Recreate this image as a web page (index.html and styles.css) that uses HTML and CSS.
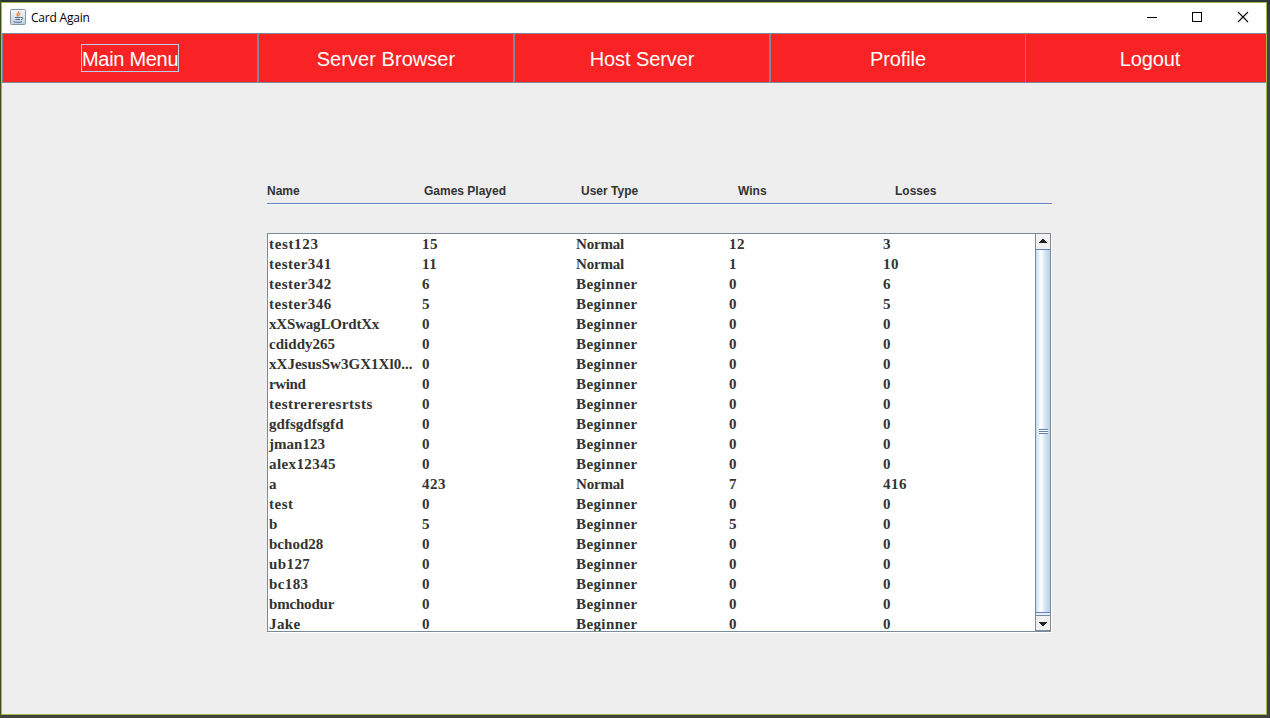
FILE: index.html
```
<!DOCTYPE html>
<html lang="en">
<head>
<meta charset="utf-8">
<title>Card Again</title>
<link rel="stylesheet" href="styles.css">
</head>
<body>
<div class="window">
  <header class="titlebar">
    <svg class="app-icon" width="16" height="16" viewBox="0 0 16 16">
      <defs><linearGradient id="tile" x1="0" y1="0" x2="0" y2="1"><stop offset="0" stop-color="#f4f6f8"/><stop offset="1" stop-color="#c3d0de"/></linearGradient></defs>
      <rect x=".5" y=".5" width="15" height="15" rx="1" fill="url(#tile)" stroke="#8295aa"/>
      <path d="M8.800 2c.8 2-2.800 2.500-1.600 4.300l.8 1.200M10.500 4.300C8.500 5 8.500 5.800 9.200 7" fill="none" stroke="#e8833a" stroke-width="1.200"/>
      <path d="M5 8.500h5.500M5.500 10.500h4.500M3.500 12.700c2 .9 7 .8 8.500 0M11 8.500c2.600-.5 2.200 1.800 0 2.200" fill="none" stroke="#4c6d8e"/>
    </svg>
    <span class="title">Card Again</span>
    <svg class="controls" width="103" height="12" viewBox="0 0 103 12" fill="none" stroke="#000" shape-rendering="crispEdges">
      <path d="M0 6.500h10"/>
      <rect x="45.500" y="1.500" width="9" height="9"/>
      <path d="M91 1l10 10M101 1L91 11" shape-rendering="auto" stroke-width="1.100"/>
    </svg>
  </header>
  <nav class="nav">
    <a class="tab"><span class="label focused">Main Menu</span></a>
    <a class="tab"><span class="label wide">Server Browser</span></a>
    <a class="tab"><span class="label">Host Server</span></a>
    <a class="tab"><span class="label">Profile</span></a>
    <a class="tab last"><span class="label">Logout</span></a>
  </nav>
  <main class="content">
    <div class="head"><span>Name</span><span>Games Played</span><span>User Type</span><span>Wins</span><span>Losses</span></div>
    <div class="list">
      <div class="rows">
        <div class="row"><span class="loose">test123</span><span>15</span><span class="tight">Normal</span><span>12</span><span>3</span></div>
        <div class="row"><span>tester341</span><span>11</span><span class="tight">Normal</span><span>1</span><span>10</span></div>
        <div class="row"><span>tester342</span><span>6</span><span class="type">Beginner</span><span>0</span><span>6</span></div>
        <div class="row"><span>tester346</span><span>5</span><span class="type">Beginner</span><span>0</span><span>5</span></div>
        <div class="row"><span class="tight">xXSwagLOrdtXx</span><span>0</span><span class="type">Beginner</span><span>0</span><span>0</span></div>
        <div class="row"><span class="snug">cdiddy265</span><span>0</span><span class="type">Beginner</span><span>0</span><span>0</span></div>
        <div class="row"><span class="snug">xXJesusSw3GX1Xl0...</span><span>0</span><span class="type">Beginner</span><span>0</span><span>0</span></div>
        <div class="row"><span class="tightest">rwind</span><span>0</span><span class="type">Beginner</span><span>0</span><span>0</span></div>
        <div class="row"><span>testrereresrtsts</span><span>0</span><span class="type">Beginner</span><span>0</span><span>0</span></div>
        <div class="row"><span class="snug">gdfsgdfsgfd</span><span>0</span><span class="type">Beginner</span><span>0</span><span>0</span></div>
        <div class="row"><span class="snug">jman123</span><span>0</span><span class="type">Beginner</span><span>0</span><span>0</span></div>
        <div class="row"><span class="type">alex12345</span><span>0</span><span class="type">Beginner</span><span>0</span><span>0</span></div>
        <div class="row"><span>a</span><span>423</span><span class="tight">Normal</span><span>7</span><span>416</span></div>
        <div class="row"><span>test</span><span>0</span><span class="type">Beginner</span><span>0</span><span>0</span></div>
        <div class="row"><span>b</span><span>5</span><span class="type">Beginner</span><span>5</span><span>0</span></div>
        <div class="row"><span class="snug">bchod28</span><span>0</span><span class="type">Beginner</span><span>0</span><span>0</span></div>
        <div class="row"><span class="type">ub127</span><span>0</span><span class="type">Beginner</span><span>0</span><span>0</span></div>
        <div class="row"><span class="type">bc183</span><span>0</span><span class="type">Beginner</span><span>0</span><span>0</span></div>
        <div class="row"><span class="tight">bmchodur</span><span>0</span><span class="type">Beginner</span><span>0</span><span>0</span></div>
        <div class="row"><span class="type">Jake</span><span>0</span><span class="type">Beginner</span><span>0</span><span>0</span></div>
      </div>
      <div class="scrollbar">
        <div class="arrow up"><svg width="8" height="4" viewBox="0 0 8 4" shape-rendering="crispEdges"><path d="M3 0h2v1h1v1h1v1h1v1H0V3h1V2h1V1h1z" fill="#222"/></svg></div>
        <div class="thumb"><i class="grip"></i></div>
        <div class="track"></div>
        <div class="arrow down"><svg width="8" height="4" viewBox="0 0 8 4" shape-rendering="crispEdges"><path d="M0 0h8v1H7v1H6v1H5v1H3V3H2V2H1V1H0z" fill="#222"/></svg></div>
      </div>
    </div>
  </main>
</div>
</body>
</html>
```
FILE: styles.css
```
* { box-sizing: border-box; }
body {
  margin: 0;
  width: 1270px;
  height: 718px;
  padding: 2px 3px 3px 1px;
  overflow: hidden;
  background: linear-gradient(90deg, #3f5216 0 1px, transparent 1px), linear-gradient(#2b3438 0 2px, #3d4742 40px, #3f4140 100%);
}
.window {
  height: 713px;
  border: 1px solid #a0b94a;
  background: #eee;
  display: flex;
  flex-direction: column;
}
.titlebar {
  height: 30px;
  padding: 0 16px 0 8px;
  background: #fff;
  display: flex;
  align-items: center;
  flex: none;
}
.app-icon { margin-top: -2px; }
.title {
  margin-left: 5px;
  font: 12px/16px "Open Sans", sans-serif;
  letter-spacing: -.2px;
  color: #000;
}
.controls { margin: -2px 0 0 auto; }
.nav {
  height: 50px;
  flex: none;
  display: grid;
  grid-template-columns: repeat(4, 256px) 1fr;
}
.tab {
  background: #f92325;
  border: 1px solid #7a8a99;
  display: flex;
  align-items: center;
  justify-content: center;
}
.tab.last { border-left: 0; border-right: 0; padding-left: 8px; }
.label {
  font: 20px/26px "Liberation Sans", Arial, sans-serif;
  letter-spacing: -.1px;
  color: #fff;
  border: 1px solid transparent;
  height: 28px;
  padding-top: 1px;
  white-space: nowrap;
}
.label.wide { letter-spacing: .05px; }
.label.focused { border-color: #b8cfe5; width: 98px; letter-spacing: -.3px; }
.content { padding: 95px 0 0 265px; }
.head {
  width: 785px;
  height: 26px;
  border-bottom: 1px solid #6382bf;
  box-shadow: 0 1px #fff;
  display: grid;
  grid-template-columns: repeat(5, 157px);
  font: bold 12px/26px "Liberation Sans", Arial, sans-serif;
  color: #333;
}
.list {
  width: 784px;
  height: 399px;
  margin-top: 29px;
  border: 1px solid #7a8a99;
  border-right: 0;
  background: #fff;
  display: flex;
  box-shadow: 1px 1px #fff;
}
.rows { width: 767px; flex: none; height: 397px; overflow: hidden; }
.row {
  height: 20px;
  padding-left: 1px;
  display: grid;
  grid-template-columns: 153px 154px 153px 154px 153px;
  font: bold 15px/20px "Liberation Serif", "Times New Roman", serif;
  letter-spacing: .5px;
  color: #333;
  white-space: nowrap;
}
.loose { letter-spacing: .65px; }
.type { letter-spacing: .4px; }
.snug { letter-spacing: .03px; }
.tight { letter-spacing: -.18px; }
.tightest { letter-spacing: -.4px; }
.scrollbar {
  width: 16px;
  border: solid #7a8a99;
  border-width: 0 1px;
  display: flex;
  flex-direction: column;
}
.arrow {
  height: 16px;
  flex: none;
  background: #f1f1f1;
  border-bottom: 1px solid #7a8a99;
  display: flex;
  align-items: center;
  justify-content: center;
}
.arrow.up { border-color: #6382bf; padding-bottom: 2px; }
.arrow.down { border-top: 1px solid #7a8a99; padding-top: 2px; }
.thumb {
  flex: 1;
  border-bottom: 1px solid #6382bf;
  background: linear-gradient(90deg, #c8ddf2 0, #fff 35%, #dbe8f5 60%, #b8cfe5 100%);
  display: flex;
  align-items: center;
  justify-content: center;
}
.grip {
  width: 9px;
  height: 5px;
  background: repeating-linear-gradient(#6480a5 0 1px, #fff 1px 2px);
}
.track { height: 2px; background: #e5eef8; }
```
